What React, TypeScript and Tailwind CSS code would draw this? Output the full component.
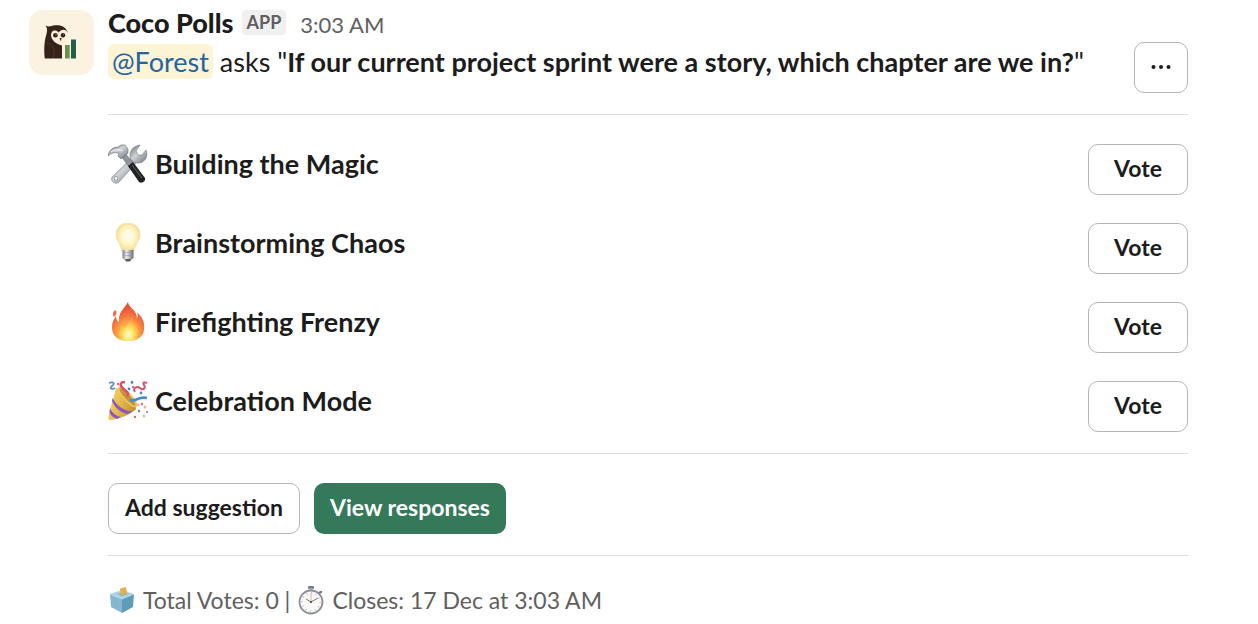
import type { ReactNode } from "react";

function OwlLogo() {
  return (
    <svg viewBox="0 0 65 65" className="size-[65px] shrink-0" role="img" aria-label="Coco Polls">
      <rect width="65" height="65" rx="14" fill="#fcf2e2" />
      <path d="M16.5 15.5 C20 17.5 22 16 26 15.3 C32 14.5 37 17 38.5 22 L32 33 L33 36 V48.5 H15.8 C15 42 15 32 17 26 C18 22 19 19 16.5 15.5Z" fill="#35231a" />
      <path d="M22 25 C22 20.5 26 18.8 29.8 22.5 C32 19 36.5 18.8 38.2 22 C40 27 38 32.5 33.5 35.5 C28 34.5 22 30.5 22 25Z" fill="#fdf0da" />
      <circle cx="26.4" cy="25.3" r="2.3" fill="#2d1d15" />
      <circle cx="34" cy="25.3" r="2.2" fill="#2d1d15" />
      <circle cx="27" cy="24.7" r="0.6" fill="#bda893" />
      <circle cx="34.5" cy="24.7" r="0.5" fill="#bda893" />
      <path d="M30.6 28 H32.6 L31.8 31.5Z" fill="#35231a" />
      <path d="M17 33 C24 34 27 40 24 48" fill="none" stroke="#543b2c" strokeWidth="0.7" />
      <rect x="36" y="35" width="4.7" height="13.5" fill="#66914e" />
      <rect x="42" y="29.5" width="5" height="19" fill="#236044" />
    </svg>
  );
}

function ToolsIcon() {
  return (
    <svg viewBox="0 0 40 40" className="size-10 shrink-0" aria-hidden="true">
      <defs>
        <linearGradient id="steel" x1="0" y1="0" x2="1" y2="1">
          <stop offset="0" stopColor="#65696f" />
          <stop offset="0.45" stopColor="#cfd3d8" />
          <stop offset="1" stopColor="#6f757c" />
        </linearGradient>
      </defs>
      <path d="M23 15 L28 19 L11 38 C8 41 2 38 4 33Z" fill="url(#steel)" stroke="#777a80" strokeWidth="0.6" />
      <path d="M23 16 C20 9 24 2 32 1 L28 7 L30 11 L34 11 L38 6 C41 13 36 20 28 19Z" fill="url(#steel)" stroke="#70757b" strokeWidth="0.6" />
      <circle cx="8" cy="34.5" r="1.8" fill="#fff" stroke="#72777e" strokeWidth="0.7" />
      <path d="M13 12 L17 9 L26 20 L21 23Z" fill="#90959b" stroke="#5d6268" strokeWidth="0.5" />
      <path d="M20 22 L25 18 L37 34 C38 37 34 40 31 38Z" fill="#202125" />
      <path d="M24 21 L34 34" stroke="#55575c" strokeWidth="1.2" />
      <path d="M0 12 C1 6 5 3 10 3 L13 1 L17 1 L20 5 L20 9 L13 15 L10 12 L11 9 C7 8 3 9 0 12Z" fill="url(#steel)" stroke="#646a70" strokeWidth="0.6" />
      <path d="M3 8 Q8 4 15 7" fill="none" stroke="#eceef0" strokeWidth="1.2" />
    </svg>
  );
}

function BulbIcon() {
  return (
    <svg viewBox="0 0 40 40" className="size-10 shrink-0" aria-hidden="true">
      <defs>
        <radialGradient id="glass" cx="50%" cy="48%" r="56%">
          <stop offset="0" stopColor="#fffef5" />
          <stop offset="0.5" stopColor="#fff6c9" />
          <stop offset="1" stopColor="#f2d98a" />
        </radialGradient>
        <linearGradient id="cap">
          <stop offset="0" stopColor="#777b80" />
          <stop offset="0.35" stopColor="#f0f1f1" />
          <stop offset="1" stopColor="#676b70" />
        </linearGradient>
      </defs>
      <path d="M20 0 C12 0 8 5 8 12 C8 18 13 21 14 28 H26 C27 21 32 18 32 12 C32 5 28 0 20 0Z" fill="url(#glass)" stroke="#f0dda0" strokeWidth="0.6" />
      <path d="M14.5 27 H25.5 V35 L22 38 H18 L14.5 35Z" fill="url(#cap)" />
      <path d="M14.5 30 L25.5 29 M14.5 33 L25.5 32" stroke="#8d9094" strokeWidth="0.6" />
      <path d="M17 36 H23 L22 38.5 H18Z" fill="#5b5d61" />
    </svg>
  );
}

function FireIcon() {
  return (
    <svg viewBox="0 0 40 40" className="size-10 shrink-0" aria-hidden="true">
      <defs>
        <radialGradient id="flame" cx="50%" cy="86%" r="78%">
          <stop offset="0" stopColor="#ffdc42" />
          <stop offset="0.4" stopColor="#ffaa42" />
          <stop offset="0.7" stopColor="#f36d3e" />
          <stop offset="1" stopColor="#e64d3d" />
        </radialGradient>
        <radialGradient id="ember" cx="50%" cy="75%" r="60%">
          <stop offset="0" stopColor="#fffbd2" />
          <stop offset="0.45" stopColor="#ffe463" />
          <stop offset="1" stopColor="#fd9d45" />
        </radialGradient>
      </defs>
      <path d="M20 0 C20 5 29 8 29 16 C30 15 30 12 29 10 C34 15 37 20 36 27 C36 35 29 39 20 39 C10 39 4 34 4 25 C4 20 6 17 8 14 C8 17 9 19 11 20 C10 10 16 7 20 0Z" fill="url(#flame)" />
      <path d="M7 8 C10 10 8 13 6 15 C4 13 5 10 7 8Z" fill="#ee6950" />
      <path d="M22 14 C22 20 30 22 30 30 C30 36 26 39 20 39 C13 39 10 35 11 29 C12 26 14 25 14 22 C15 24 16 25 17 26 C19 22 23 20 22 14Z" fill="url(#ember)" />
    </svg>
  );
}

function PartyIcon() {
  return (
    <svg viewBox="0 0 40 40" className="size-10 shrink-0" aria-hidden="true">
      <defs>
        <linearGradient id="cone" x1="0" y1="0.6" x2="1" y2="1">
          <stop offset="0" stopColor="#f3ce62" />
          <stop offset="0.5" stopColor="#dcae42" />
          <stop offset="1" stopColor="#b98424" />
        </linearGradient>
      </defs>
      <path d="M8 7 C14 7 29 21 28 28 C24 33 9 39 1 39 C0 38 0 36 1 33Z" fill="url(#cone)" />
      <path d="M4.5 17 C9 25 16 30 24 30.5 L20 33 C13 32 7 27 4 20Z" fill="#8b55c2" />
      <path d="M2 27 C4 32 8 35 13 36 L9 38 C5 36 2 34 1.5 31Z" fill="#8b55c2" />
      <ellipse cx="19.5" cy="16" rx="12.5" ry="3.5" transform="rotate(47 19.5 16)" fill="#c4933b" stroke="#ecc760" strokeWidth="1.8" />
      <path d="M19 15 C23 12 14 8 13 5 C12 2 14 1 17 1" fill="none" stroke="#dc5164" strokeWidth="2.6" />
      <path d="M22 19 C28 21 30 15 39 17" fill="none" stroke="#438bd6" strokeWidth="2.8" />
      <path d="M27 11 C24 7 29 5 32 7 C35 10 38 7 36 4 C34 1 37 1 39 2" fill="none" stroke="#d55370" strokeWidth="2" />
      <path d="M1 2 C6 0 7 3 4 5 C1 7 4 9 7 7" fill="none" stroke="#5790cf" strokeWidth="1.8" />
      <g fill="#e1677b">
        <circle cx="10" cy="3" r="1.2" />
        <circle cx="25" cy="6" r="1.2" />
        <circle cx="34" cy="23" r="1.2" />
        <circle cx="27" cy="36" r="1.2" />
      </g>
      <g fill="#4d87cd">
        <circle cx="24" cy="1.5" r="1.4" />
        <circle cx="33" cy="12" r="1.4" />
        <circle cx="31" cy="30" r="1.2" />
        <circle cx="21" cy="8" r="1.4" />
      </g>
      <g fill="#efb985">
        <circle cx="30" cy="24" r="1.4" />
        <circle cx="37" cy="26" r="1.5" />
        <circle cx="36" cy="35" r="1.4" />
      </g>
      <circle cx="39" cy="31" r="1" fill="#936bc0" />
    </svg>
  );
}

function BallotIcon() {
  return (
    <svg viewBox="0 0 28 28" className="size-7 shrink-0" aria-hidden="true">
      <path d="M2 8 L14 4 L26 8 L14 13Z" fill="#a9d3e1" />
      <path d="M2 8 L14 13 V27 L3 21Z" fill="#85b8cf" />
      <path d="M26 8 L14 13 V27 L25 21Z" fill="#609bb9" />
      <path d="M10 8 L14 6.5 L20 8 L14 10Z" fill="#7dabbc" />
      <path d="M12 2.5 L18 1 L19 8 L13 9.5Z" fill="#e8ac4d" />
      <path d="M2 8 L14 13 L26 8" fill="none" stroke="#b9dfec" strokeWidth="0.8" />
    </svg>
  );
}

function StopwatchIcon() {
  return (
    <svg viewBox="0 0 28 30" className="h-[30px] w-7 shrink-0" aria-hidden="true">
      <rect x="11" y="1" width="6" height="3" rx="1" fill="#777e8b" />
      <rect x="12.5" y="3" width="3" height="4" fill="#a4a9b1" />
      <path d="M22 8 L24 7" stroke="#6e7582" strokeWidth="2.5" strokeLinecap="round" />
      <circle cx="14" cy="17" r="11.5" fill="#f8f8f8" stroke="#8b9099" strokeWidth="1.8" />
      <circle cx="14" cy="17" r="9" fill="none" stroke="#9da1a8" strokeWidth="1.5" strokeDasharray="0.7 4.01" />
      <path d="M14 18 V8" stroke="#e09c91" strokeWidth="0.8" />
      <path d="M9 14 L14 17 L21 13" fill="none" stroke="#666b74" strokeWidth="0.9" />
      <circle cx="14" cy="17" r="1" fill="#414750" />
    </svg>
  );
}

const options: { label: string; icon: ReactNode }[] = [
  { label: "Building the Magic", icon: <ToolsIcon /> },
  { label: "Brainstorming Chaos", icon: <BulbIcon /> },
  { label: "Firefighting Frenzy", icon: <FireIcon /> },
  { label: "Celebration Mode", icon: <PartyIcon /> },
];

const outlineButton =
  "h-[51px] shrink-0 rounded-[10px] border border-[#b5b5b5] bg-white pb-0.5 text-[23px] font-bold hover:bg-gray-50";

export default function App() {
  return (
    <main className="flex items-start gap-3.5 bg-white pt-2.5 pr-[70px] pb-2 pl-[29px] font-['Lato',sans-serif] text-[#1d1c1d]">
      <OwlLogo />

      <article className="min-w-0 flex-1">
        <header className="flex items-end justify-between gap-4 border-b border-[#dddddd] pb-[21px]">
          <div className="min-w-0 pb-[11px]">
            <div className="flex h-8 items-start">
              <h1 className="text-[27px] leading-[26px] font-black">Coco Polls</h1>
              <span className="ml-2 rounded bg-[#f0f0f0] px-[5px] text-lg leading-[25px] font-bold text-[#616061]">
                APP
              </span>
              <time className="ml-3.5 text-[22px] leading-[30px] text-[#616061]">3:03 AM</time>
            </div>
            <p className="text-[27px] leading-10">
              <a href="#forest" className="rounded-md bg-[#fdf3d5] px-1 py-px text-[#2463a0]">
                @Forest
              </a>{" "}
              asks "<strong className="font-bold">If our current project sprint were a story, which chapter are we in?</strong>"
            </p>
          </div>
          <button
            type="button"
            aria-label="More actions"
            className="flex h-[51px] w-[54px] shrink-0 items-center justify-center rounded-[10px] border border-[#b5b5b5] bg-white pb-0.5"
          >
            <svg viewBox="0 0 20 6" className="h-1.5 w-5" fill="currentColor" aria-hidden="true">
              <circle cx="2.5" cy="3" r="2" />
              <circle cx="10" cy="3" r="2" />
              <circle cx="17.5" cy="3" r="2" />
            </svg>
          </button>
        </header>

        <ul className="flex flex-col gap-7 border-b border-[#dddddd] pt-[29px] pb-[21px]">
          {options.map(({ label, icon }) => (
            <li key={label} className="flex items-start justify-between">
              <div className="flex items-center gap-[7px]">
                {icon}
                <h2 className="text-[27px] leading-10 font-bold">{label}</h2>
              </div>
              <button type="button" aria-label={`Vote for ${label}`} className={`${outlineButton} w-[100px]`}>
                Vote
              </button>
            </li>
          ))}
        </ul>

        <div className="flex gap-3.5 border-b border-[#dddddd] pt-[29px] pb-[21px]">
          <button type="button" className={`${outlineButton} w-48`}>
            Add suggestion
          </button>
          <button
            type="button"
            className="h-[51px] w-48 rounded-[10px] bg-[#35795b] pb-0.5 text-[23px] font-bold text-white"
          >
            View responses
          </button>
        </div>

        <footer className="flex items-center gap-[7px] pt-7 text-[23px] leading-8 text-[#616061]">
          <BallotIcon />
          <span>Total Votes: 0 |</span>
          <StopwatchIcon />
          <span>Closes: 17 Dec at 3:03 AM</span>
        </footer>
      </article>
    </main>
  );
}
